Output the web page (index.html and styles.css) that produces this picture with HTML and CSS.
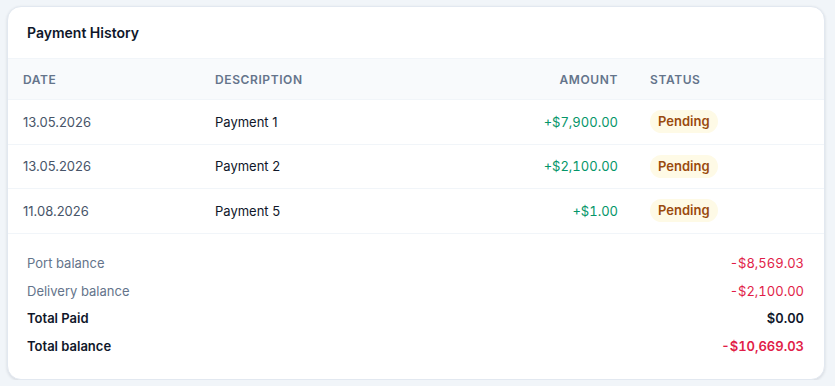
FILE: index.html
```html
<!DOCTYPE html>
<html>
<head>
<meta charset="utf-8">
<link rel="stylesheet" href="styles.css">
</head>
<body>
<div class="card">
  <div class="card-header">Payment History</div>
  <table class="tbl">
    <thead>
      <tr>
        <th class="c-date">Date</th>
        <th class="c-desc">Description</th>
        <th class="c-amt">Amount</th>
        <th class="c-status">Status</th>
      </tr>
    </thead>
    <tbody>
      <tr>
        <td class="c-date">13.05.2026</td>
        <td class="c-desc">Payment 1</td>
        <td class="c-amt pos">+$7,900.00</td>
        <td class="c-status"><span class="badge">Pending</span></td>
      </tr>
      <tr>
        <td class="c-date">13.05.2026</td>
        <td class="c-desc">Payment 2</td>
        <td class="c-amt pos">+$2,100.00</td>
        <td class="c-status"><span class="badge">Pending</span></td>
      </tr>
      <tr>
        <td class="c-date">11.08.2026</td>
        <td class="c-desc">Payment 5</td>
        <td class="c-amt pos">+$1.00</td>
        <td class="c-status"><span class="badge">Pending</span></td>
      </tr>
    </tbody>
  </table>
  <div class="summary">
    <div class="srow"><span class="lbl">Port balance</span><span class="num neg">-$8,569.03</span></div>
    <div class="srow"><span class="lbl">Delivery balance</span><span class="num neg">-$2,100.00</span></div>
    <div class="srow strong"><span>Total Paid</span><span class="num">$0.00</span></div>
    <div class="srow strong"><span>Total balance</span><span class="num neg">-$10,669.03</span></div>
  </div>
</div>
</body>
</html>
```

FILE: styles.css
```css
* { box-sizing: border-box; }
html, body { margin: 0; }
body {
  background: #f1f5f9;
  font-family: Inter, "Noto Sans", sans-serif;
  padding: 6px 10px 0 7px;
  color: #0f172a;
}
.card {
  background: #fff;
  border: 1px solid #e2e8f0;
  border-radius: 14px;
  box-shadow: 0 1px 3px rgba(15, 23, 42, 0.12);
  overflow: hidden;
}
.card-header {
  height: 51px;
  padding: 0 19px;
  display: flex;
  align-items: center;
  font-size: 14px;
  font-weight: 600;
  color: #0f172a;
}
.tbl {
  width: 100%;
  border-collapse: collapse;
  table-layout: fixed;
}
.tbl th {
  background: #f8fafc;
  height: 41px;
  font-size: 12px;
  font-weight: 600;
  color: #64748b;
  text-transform: uppercase;
  letter-spacing: 0.05em;
  text-align: left;
  padding: 0 15px;
  border-top: 1px solid #f1f5f9;
}
.tbl td {
  height: 44.5px;
  padding: 0 15px;
  font-size: 13px;
  border-top: 1px solid #f1f5f9;
}
.tbl tbody tr:last-child td { border-bottom: 1px solid #f1f5f9; }
.c-date { width: 192px; color: #475569; }
.c-desc { color: #0f172a; }
.tbl .c-amt { width: 160px; text-align: right; }
.tbl .c-status { width: 191px; padding-left: 17px; }
.pos {
  color: #059669;
  font-variant-numeric: tabular-nums;
}
.badge {
  display: inline-block;
  background: #fefae6;
  color: #9a4a0e;
  font-weight: 600;
  font-size: 13px;
  line-height: 17px;
  padding: 3px 8px;
  border-radius: 999px;
}
.summary {
  padding: 16px 20px 19px 19px;
  display: flex;
  flex-direction: column;
}
.srow {
  display: flex;
  justify-content: space-between;
  align-items: center;
  height: 27.6px;
  font-size: 13px;
}
.lbl { color: #64748b; }
.num { font-variant-numeric: tabular-nums; }
.neg { color: #e11d48; }
.strong { font-weight: 600; color: #0f172a; }
```
